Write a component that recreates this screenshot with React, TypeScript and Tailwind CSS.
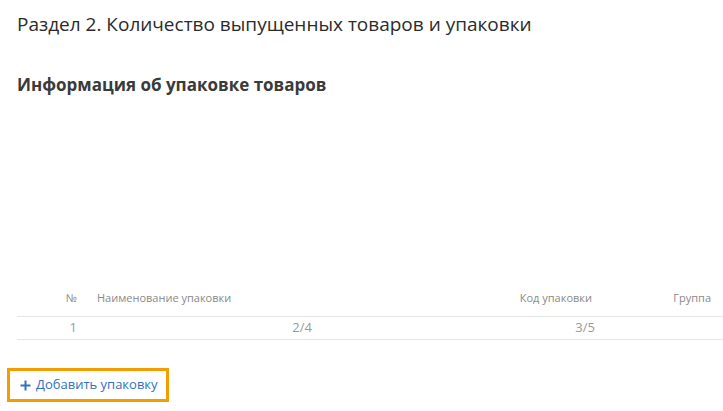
export default function App() {
  return (
    <div className="w-[723px] h-[411px] bg-white overflow-hidden text-[#333] font-['Open_Sans',sans-serif]">
      <h1 className="pl-[17px] pt-[10px] text-[19px] leading-[28px] font-normal text-[#2b2b2b]">
        Раздел 2. Количество выпущенных товаров и упаковки
      </h1>
      <h2 className="pl-[17px] mt-[35px] text-[17px] leading-[24px] font-bold text-[#3a3a3a]">
        Информация об упаковке товаров
      </h2>

      <div className="ml-[17px] mt-[186px] text-[11px] text-[#8a8a8a]">
        <div className="flex h-[34px] items-end pb-[10px] border-b border-[#e6e6e6]">
          <div className="w-[60px] text-right">№</div>
          <div className="w-[235px] pl-[20px]">Наименование упаковки</div>
          <div className="w-[280px] text-right">Код упаковки</div>
          <div className="w-[119px] text-right">Группа</div>
        </div>
        <div className="flex h-[23px] items-center text-[13px] text-[#9a9a9a] border-b border-[#e6e6e6]">
          <div className="w-[60px] text-right">1</div>
          <div className="w-[235px] text-right">2/4</div>
          <div className="w-[283px] text-right">3/5</div>
        </div>
      </div>

      <div className="pl-[7px] mt-[28px]">
        <button className="flex items-center gap-[5px] h-[34px] w-[162px] pl-[10px] border-[3px] border-[#f59c00] text-[13px] text-[#3370c4]">
          <svg width="11" height="11" viewBox="0 0 11 11">
            <path d="M5.5 0.5v10M0.5 5.5h10" stroke="#3370c4" strokeWidth="2" />
          </svg>
          <span>Добавить упаковку</span>
        </button>
      </div>
    </div>
  );
}
